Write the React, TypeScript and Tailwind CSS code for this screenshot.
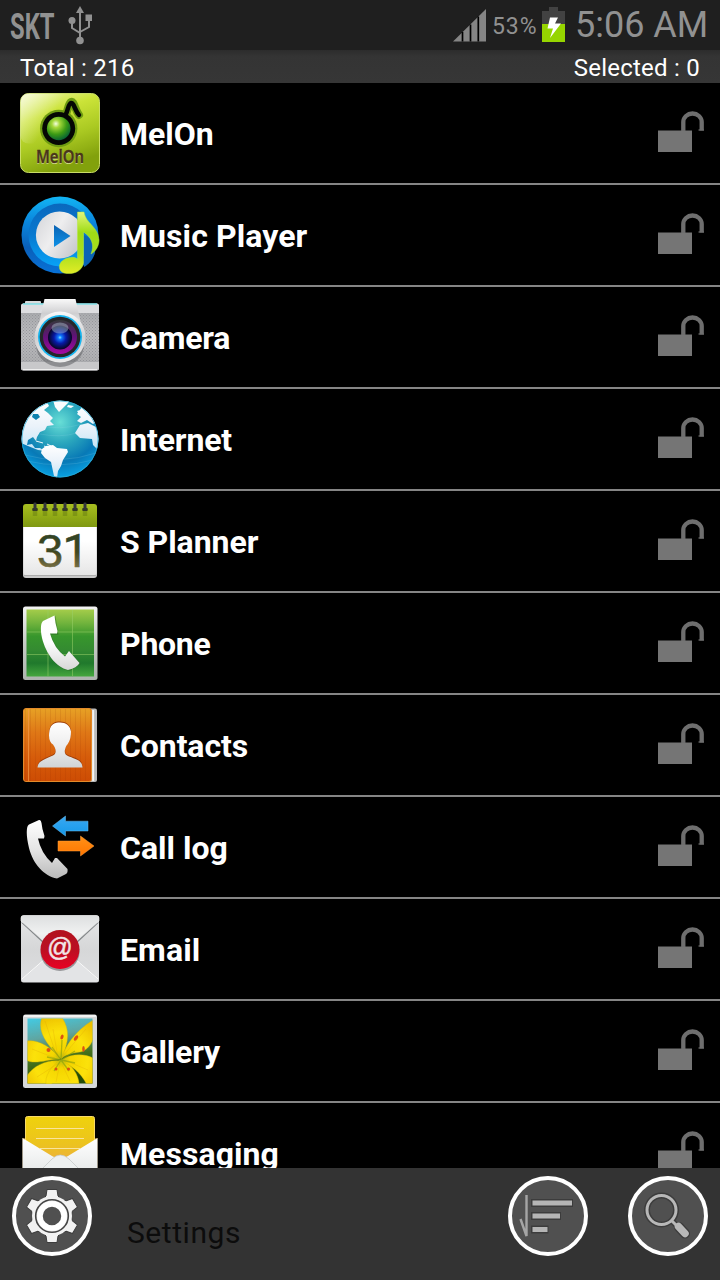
import type { ReactNode } from "react";

function Grad({ id, stops, x2 = 0, y2 = 1 }: { id: string; stops: string[]; x2?: number; y2?: number }) {
  return (
    <linearGradient id={id} x1="0" y1="0" x2={x2} y2={y2}>
      {stops.map((c, i) => (
        <stop key={i} offset={i / (stops.length - 1)} stopColor={c} />
      ))}
    </linearGradient>
  );
}

function Icon({ children }: { children: ReactNode }) {
  return (
    <svg viewBox="0 0 80 80" className="h-20 w-20 shrink-0">
      {children}
    </svg>
  );
}

const MelonIcon = () => (
  <Icon>
    <defs>
      <Grad id="mel-bg" x2={0.35} stops={["#eef6b0", "#cbe338", "#aac922", "#82a10c"]} />
      <Grad id="mel-shine" x2={1} y2={0.4} stops={["#ffffff99", "#ffffff00", "#cdea2200"]} />
      <radialGradient id="mel-ball" cx="0.38" cy="0.3" r="0.75">
        <stop offset="0" stopColor="#f4ffe0" />
        <stop offset="0.22" stopColor="#a5d83a" />
        <stop offset="0.6" stopColor="#3c9b14" />
        <stop offset="1" stopColor="#005c38" />
      </radialGradient>
    </defs>
    <rect x="0.5" y="0.5" width="79" height="79" rx="8" fill="url(#mel-bg)" stroke="#c9dd67" />
    <rect x="0.5" y="0.5" width="79" height="50" rx="8" fill="url(#mel-shine)" />
    <path d="M46 21 C48 17 48.500 10 51 9 C54 7.500 55 17 59 22" fill="none" stroke="#6e9b12" strokeWidth="8" strokeLinecap="round" />
    <circle cx="38.700" cy="35.500" r="18.700" fill="#6e9b12" />
    <path d="M46 21 C48 17 48.500 10.500 51 10 C54 9.500 55 18 59 22" fill="none" stroke="#050704" strokeWidth="4.500" strokeLinecap="round" />
    <circle cx="38.700" cy="35.500" r="16.500" fill="#050704" />
    <circle cx="38.700" cy="35.500" r="11.800" fill="url(#mel-ball)" />
    <text x="16" y="71" textLength="48" lengthAdjust="spacingAndGlyphs" fill="#e4ee9a" className="font-['Noto_Sans'] text-[17.5px] font-semibold">MelOn</text>
    <text x="16" y="70" textLength="48" lengthAdjust="spacingAndGlyphs" fill="#49351a" stroke="#49351a" strokeWidth="0.400" className="font-['Noto_Sans'] text-[17.5px] font-semibold">MelOn</text>
  </Icon>
);

const MusicIcon = () => (
  <Icon>
    <defs>
      <Grad id="mu-a" stops={["#12b5f4", "#0a86dc", "#0a5fb9", "#0872d8"]} />
      <Grad id="mu-b" stops={["#0a68bd", "#0879d0", "#08a2f6"]} />
      <Grad id="mu-c" x2={1} y2={0.6} stops={["#d3d4d8", "#eeeeef", "#c8c9ce"]} />
      <Grad id="mu-d" stops={["#e3f67a", "#9fdc16", "#a8de1d", "#e2ec25"]} />
      <Grad id="mu-e" stops={["#0b63b3", "#0e91e7"]} />
    </defs>
    <circle cx="40" cy="40" r="38.500" fill="url(#mu-a)" />
    <circle cx="40" cy="40" r="31.500" fill="url(#mu-b)" />
    <circle cx="39.500" cy="40" r="23.600" fill="url(#mu-c)" />
    <path d="M34 30 L50.500 41 L34 52 Z" fill="url(#mu-e)" />
    <path d="M64 40 C72 43 76 51 75 58 C73 65 68 70 64 72 Z" fill="#0a64b4" />
    <path d="M57.500 17 L64 17 C66 29 78 31 79 45 C79 51 76 56 71 59 C75 49 71 42 63.500 37 L63.500 68 C62 77 52 80 44 78 C36 75 39 65 48 63 C52 62 55 62 57.500 64 Z" fill="url(#mu-d)" stroke="#b5e83e" strokeWidth="0.500" />
  </Icon>
);

const CameraIcon = () => (
  <Icon>
    <defs>
      <Grad id="ca-b" stops={["#a4a5a9", "#bdbdc0", "#a9a9ab"]} />
      <Grad id="ca-m" stops={["#f9f9f9", "#cfcfd1", "#eeeeee"]} />
      <Grad id="ca-l" stops={["#35383b", "#62117a", "#a50aa3"]} />
      <radialGradient id="ca-g">
        <stop offset="0" stopColor="#7ce9ff" />
        <stop offset="0.16" stopColor="#1175ff" />
        <stop offset="0.5" stopColor="#0719a5" />
        <stop offset="1" stopColor="#07051f" />
      </radialGradient>
      <pattern id="ca-p" width="3" height="3" patternUnits="userSpaceOnUse">
        <rect width="1" height="1" fill="#94959a" />
        <rect x="1.500" y="1.500" width="1" height="1" fill="#94959a" />
      </pattern>
    </defs>
    <rect x="5" y="4" width="16" height="5" rx="1" fill="#d9dadc" />
    <rect x="1" y="6.500" width="78" height="67" rx="2.500" fill="url(#ca-b)" />
    <path d="M1 16 V9 Q1 6.500 3.500 6.500 H76.500 Q79 6.500 79 9 V16 Z" fill="#dddde0" />
    <path d="M3 7 H77" stroke="#56e5ef" strokeWidth="1.200" />
    <rect x="1" y="16" width="78" height="49" fill="url(#ca-p)" />
    <path d="M1 65 H79 V71 Q79 73.500 76.500 73.500 H3.500 Q1 73.500 1 71 Z" fill="#c8c8ca" />
    <path d="M3 72.500 H77" stroke="#eee" />
    <ellipse cx="40" cy="48" rx="24" ry="22" fill="#66676b" opacity="0.600" />
    <path d="M24.500 2 H55.500 L62 31 H18 Z" fill="url(#ca-m)" />
    <circle cx="40" cy="40" r="25.500" fill="url(#ca-m)" />
    <circle cx="40" cy="40" r="22" fill="#17b5ef" />
    <circle cx="40" cy="40" r="20.300" fill="#25272a" />
    <circle cx="40" cy="40" r="17" fill="url(#ca-l)" />
    <circle cx="40" cy="40.500" r="12" fill="url(#ca-g)" />
    <ellipse cx="40" cy="31" rx="8.500" ry="5.500" fill="#aec5d5" opacity="0.450" />
  </Icon>
);

const InternetIcon = () => (
  <Icon>
    <defs>
      <radialGradient id="in-g" cx="0.5" cy="0.28" r="0.72">
        <stop offset="0" stopColor="#68ded6" />
        <stop offset="0.38" stopColor="#2ba7bd" />
        <stop offset="0.72" stopColor="#0879b6" />
        <stop offset="1" stopColor="#08a1e3" />
      </radialGradient>
      <Grad id="in-l" stops={["#ffffff", "#eaf2fa", "#c3e4f6"]} />
      <clipPath id="in-c"><circle cx="40" cy="40" r="38.500" /></clipPath>
    </defs>
    <circle cx="40" cy="40" r="38.500" fill="url(#in-g)" />
    <g clipPath="url(#in-c)">
      <path d="M5 56 Q40 66 76 54 M7 62 Q40 70 73 61 M17 26 Q40 32 62 25 M20 35 Q40 39 57 34" fill="none" stroke="#9bdeef" strokeWidth="0.500" opacity="0.350" />
      <path d="M0 23 L14 10 L27 3 L29 7 L24 11 L28 14 L33 19 L30 22 L34 26 L27 27 L25 31 L20 33 L17 38 L16 42 L13 38 L8 41 L7 46 L12 45 L15 49 L20 49 L25 52 L18 51 L8 47 L1 44 Z" fill="url(#in-l)" />
      <path d="M13 15 L18 15 L20 18 L16 21 L12 18 Z" fill="#0d82ae" />
      <path d="M33 1 L50 2 L45 7 L39 13 L35 8 Z" fill="#fbfdfe" />
      <path d="M48 6 L54 7 L51 9 L47 8 Z M57 12 L60 11 L59 15 Z M62 8 L68 13 L76 23 L73 25 L67 21 L61 24 L57 22 L61 18 L57 15 Z M60 26 L68 24 L76 28 L80 39 L77 50 L73 46 L72 40 L60 39 L55 34 Z" fill="url(#in-l)" />
      <path d="M27 45 L31 47 L29 49 M16 42 L23 44 M24 47 L28 49" fill="none" stroke="#eff7fc" strokeWidth="1" />
      <path d="M22 50 L26 47 L33 46 L37 49 L47 50 L48 53 L43 61 L41 67 L38 72 L37 79 L34 77 L31 63 L25 59 L21 54 Z" fill="url(#in-l)" />
    </g>
    <circle cx="40" cy="40" r="38" fill="none" stroke="#2eacd3" strokeWidth="0.700" />
  </Icon>
);

const PlannerIcon = () => (
  <Icon>
    <defs>
      <Grad id="pl-g" stops={["#a7bd20", "#93ac16", "#7f9813"]} />
      <Grad id="pl-w" stops={["#ffffff", "#ffffff", "#e6e6e6"]} />
      <linearGradient id="pl-t" gradientUnits="userSpaceOnUse" x1="0" y1="32" x2="0" y2="67">
        <stop offset="0" stopColor="#304326" /><stop offset="0.55" stopColor="#414720" /><stop offset="1" stopColor="#776f45" />
      </linearGradient>
    </defs>
    <rect x="3" y="5" width="74" height="72" rx="3" fill="#c9c9c9" />
    <rect x="3.500" y="6" width="73" height="68" rx="2" fill="url(#pl-w)" />
    <path d="M4 74.500 H76" stroke="#9b9b9b" strokeWidth="0.600" />
    <path d="M3 26 V6 Q3 3 6 3 H74 Q77 3 77 6 V26 Z" fill="url(#pl-g)" />
    {[15, 25, 35, 45, 55, 65].map((x) => (
      <g key={x}>
        <rect x={x - 2.2} y="10" width="4.400" height="5" fill="#708612" opacity="0.600" />
        <rect x={x - 2.8} y="7" width="5.600" height="3" rx="1" fill="#343a25" />
        <rect x={x - 1.5} y="1.500" width="3" height="7" rx="1" fill="#34363a" />
      </g>
    ))}
    <text y="66" fill="url(#pl-t)" stroke="url(#pl-t)" strokeWidth="0.500">
      <tspan x="17" className="font-['Liberation_Sans'] text-[47px]">3</tspan>
      <tspan x="42.500" className="font-[Roboto] text-[47px]">1</tspan>
    </text>
  </Icon>
);

const PhoneIcon = () => (
  <Icon>
    <defs>
      <Grad id="ph-g" stops={["#a4cc4a", "#72b43d", "#37962c", "#348b31", "#20792c", "#44a63d"]} />
      <Grad id="ph-f" stops={["#f2f2f2", "#c5cac5", "#adb3ae"]} />
      <Grad id="ph-h" stops={["#ffffff", "#fefefe", "#d7d7d7"]} />
    </defs>
    <rect x="3" y="3.500" width="74.500" height="73.500" rx="2.500" fill="url(#ph-f)" />
    <rect x="6.500" y="6.500" width="67.500" height="67" fill="url(#ph-g)" />
    <path d="M28 7 V73 M52.500 7 V73 M7 29 H74 M7 51.500 H74" stroke="#9bd06a" strokeWidth="0.800" opacity="0.650" />
    <path d="M23 18 L34.500 12 L37.500 31 L30 31 Q35 45 45 54 L49 48 L60 60 L49 67 C36 65 25 51 22 35 C20 25 21 20 23 18 Z" transform="translate(1 1)" fill="#2b6c26" opacity="0.500" />
    <path d="M23 18 L34.500 12.500 Q35 20 37.500 28 L37 30.500 L30 30.500 Q34 45 45 53.500 L49 48 L59.500 60 Q57 65 48 67 C36 64 26 51 22 35 C20 25 21 20 23 18 Z" fill="url(#ph-h)" strokeLinejoin="round" />
  </Icon>
);

const ContactsIcon = () => (
  <Icon>
    <defs>
      <Grad id="co-g" stops={["#e7a125", "#df7716", "#d65c0a", "#cd4c04"]} />
      <Grad id="co-p" stops={["#ffffff", "#eeeeee", "#d0d4d6"]} />
      <pattern id="co-s" width="5" height="8" patternUnits="userSpaceOnUse"><rect width="1" height="8" fill="#8c2c00" opacity="0.120" /></pattern>
    </defs>
    <rect x="68" y="3.500" width="9" height="73.500" rx="2" fill="#b9b9b9" />
    <path d="M73.200 5 V76" stroke="#f5f5f5" strokeWidth="2" />
    <rect x="3.500" y="3.500" width="68" height="73" rx="2.500" fill="url(#co-g)" stroke="#e38a29" />
    <rect x="4" y="4" width="67" height="72" fill="url(#co-s)" />
    <path d="M8.500 4 V76" stroke="#f39a48" strokeWidth="0.700" />
    <path d="M17.500 62 C18 55 25 54 33 50 C37 48 36 43 33 39 C30 37 28 33 29.500 25 C31 18 35 17 40 17 C46 17 50 20 51 26 C51 35 48 38 46 41 C44 46 44 49 49 51 C57 54 62 55 62.500 62 Z" transform="translate(0 -0.500)" fill="#9e3e08" />
    <path d="M17.500 62 C18 55 25 54 33 50 C37 48 36 43 33 39 C30 37 28 33 29.500 25 C31 18 35 17 40 17 C46 17 50 20 51 26 C51 35 48 38 46 41 C44 46 44 49 49 51 C57 54 62 55 62.500 62 Z" transform="translate(0 0.500)" fill="url(#co-p)" />
  </Icon>
);

const CallLogIcon = () => (
  <Icon>
    <defs>
      <Grad id="cl-h" stops={["#ffffff", "#e5e5e5", "#bababa"]} />
      <Grad id="cl-b" stops={["#39a8f2", "#1599e9"]} />
      <Grad id="cl-o" stops={["#ff9118", "#ff7600"]} />
    </defs>
    <path d="M9 17.500 L19 13 Q21 12.500 21.500 16 Q22 22 24.500 29 L24 31.500 L18 31.500 Q21 46 32 56 L35 51 L37 51 L47.500 62 Q48 66 46 67 L37 71.500 C24 69 13 57 9 41 C6 29 6 19 9 17.500 Z" fill="url(#cl-h)" />
    <path d="M32.500 19 L45.500 9 V14.200 H68 V24 H45.500 V29 Z" fill="url(#cl-b)" stroke="#68bcf3" strokeWidth="0.500" />
    <path d="M38 34 H60.500 V29 L74 39 L60.500 49 V44 H38 Z" fill="url(#cl-o)" stroke="#ff9f3d" strokeWidth="0.500" />
  </Icon>
);

const EmailIcon = () => (
  <Icon>
    <defs>
      <Grad id="em-g" stops={["#e5e6e7", "#d6d7d8", "#dddee0"]} />
      <Grad id="em-t" stops={["#dddfe0", "#f0f1f1", "#d9dbdc"]} />
      <Grad id="em-r" stops={["#b2121f", "#ba1022", "#e90023"]} />
    </defs>
    <rect x="1" y="6.500" width="78" height="67" rx="2.500" fill="url(#em-g)" />
    <path d="M2 71 L34 42 H46 L78 71 L76 73 H4 Z" fill="#e3e4e6" />
    <path d="M2 70 L34 42 M78 70 L46 42" stroke="#fafafa" />
    <path d="M1 13.500 L30 40.500 Q40 48 50 40.500 L79 13.500" fill="#84888a" />
    <path d="M1 9 Q1 6.500 3.500 6.500 H76.500 Q79 6.500 79 9 V12 L50 38 Q40 46 30 38 L1 12 Z" fill="url(#em-t)" stroke="#eeeeee" strokeWidth="0.600" />
    <ellipse cx="40" cy="43" rx="19.500" ry="19" fill="#76777b" opacity="0.700" />
    <circle cx="40" cy="40.500" r="19.500" fill="url(#em-r)" />
    <text x="40" y="47" textAnchor="middle" fill="#f2e4e6" stroke="#f2e4e6" strokeWidth="0.500" className="font-['Liberation_Sans'] text-[25px]">@</text>
  </Icon>
);

const GalleryIcon = () => (
  <Icon>
    <defs>
      <Grad id="ga-g" x2={0.2} stops={["#42cce6", "#60a6a2", "#45721e", "#244d08"]} />
      <radialGradient id="ga-p" gradientUnits="userSpaceOnUse" cx="41" cy="48" r="45">
        <stop offset="0" stopColor="#b7bd12" /><stop offset="0.2" stopColor="#f4d500" /><stop offset="0.6" stopColor="#fce20b" /><stop offset="1" stopColor="#edc000" />
      </radialGradient>
      <clipPath id="ga-c"><rect x="7.500" y="7.500" width="65" height="65" /></clipPath>
    </defs>
    <rect x="3" y="3.500" width="74" height="73.500" rx="2.500" fill="#d6d9da" />
    <rect x="4" y="4" width="72" height="2" fill="#f2f3f3" />
    <g clipPath="url(#ga-c)">
      <rect x="7" y="7" width="66" height="66" fill="url(#ga-g)" />
      <g fill="url(#ga-p)" stroke="#dcb908" strokeWidth="0.400">
        <path d="M40 47 C28 34 15 20 23 4 L41 5 C52 20 47 34 42 47 Z" />
        <path d="M41 48 C46 35 54 20 75 8 C77 24 71 39 60 41 C51 42 45 44 41 48 Z" />
        <path d="M40 47 C30 35 18 28 5 30 V48 C13 55 27 48 40 48 Z" />
        <path d="M40 50 C28 48 10 55 5 69 L9 75 H31 C34 66 35 56 40 50 Z" />
        <path d="M40 49 C30 56 23 68 27 76 H59 C60 66 53 54 42 49 Z" />
        <path d="M41 49 C52 42 67 42 76 49 L77 74 H67 C61 61 51 55 41 49 Z" />
      </g>
      <path d="M38 47 L33 18 M37 46 L25 10 M42 46 L66 18 M35 47 L12 38 M44 49 L68 59 M39 52 L17 66 M40 52 L36 71 M42 53 L50 70" stroke="#d99b05" strokeWidth="0.600" opacity="0.400" />
      <path d="M41 49 L42 29 M41 49 L32 36 M41 49 L55 40 M41 49 L34 60 M41 49 L49 60 M41 49 L27 46 M41 49 L55 52" stroke="#839d0f" strokeWidth="1.300" opacity="0.600" />
      <g fill="#dc5213">
        <ellipse cx="42" cy="26" rx="1.500" ry="2.500" transform="rotate(20 42 26)" /><ellipse cx="56" cy="27" rx="1.600" ry="3" transform="rotate(35 56 27)" />
        <circle cx="28.500" cy="39" r="2" /><ellipse cx="63.500" cy="38" rx="1.300" ry="3" /><circle cx="36" cy="58" r="1.500" /><circle cx="48.500" cy="58" r="1.600" />
      </g>
    </g>
  </Icon>
);

const MessagingIcon = () => (
  <Icon>
    <defs>
      <Grad id="me-y" stops={["#efd20c", "#ecc31e", "#eca451"]} />
      <Grad id="me-w" stops={["#ffffff", "#d9dddd"]} />
    </defs>
    <path d="M2.500 25 H77.500 V78 H2.500 Z" fill="#8a6a30" />
    <rect x="5.500" y="3.500" width="69" height="55" rx="2" fill="url(#me-y)" stroke="#f8d967" />
    <path d="M16 15.500 H64 M16 25.500 H64 M20 35.500 H60" stroke="#f8e49c" strokeWidth="1" />
    <path d="M2.500 25 L32 43 Q40 48 48 43 L77.500 25 V78 H2.500 Z" fill="url(#me-w)" />
    <path d="M7 71 L32 46 Q40 38 49 46 L74 71 Z" fill="#edf0f0" stroke="#c1c5c5" strokeWidth="0.700" />
  </Icon>
);

const Lock = () => (
  <svg viewBox="0 0 54 44" className="mb-[2px] h-[44px] w-[54px] shrink-0" fill="none">
    <path d="M5 20.500 H39 V42 H5 Z" fill="#757575" />
    <path d="M30.300 21 V12 A9.200 8.500 0 0 1 48.700 12 V20.500" stroke="#6e6e6e" strokeWidth="4.300" />
    <path d="M45.500 20 H51" stroke="#6e6e6e" strokeWidth="1.200" />
  </svg>
);

const apps: { name: string; icon: () => ReactNode; cls: string }[] = [
  { name: "MelOn", icon: MelonIcon, cls: "tracking-[0px]" },
  { name: "Music Player", icon: MusicIcon, cls: "tracking-[0.08px]" },
  { name: "Camera", icon: CameraIcon, cls: "tracking-[-0.2px]" },
  { name: "Internet", icon: InternetIcon, cls: "tracking-[-0.15px]" },
  { name: "S Planner", icon: PlannerIcon, cls: "tracking-[-0.05px]" },
  { name: "Phone", icon: PhoneIcon, cls: "tracking-[-0.25px]" },
  { name: "Contacts", icon: ContactsIcon, cls: "tracking-[-0.1px]" },
  { name: "Call log", icon: CallLogIcon, cls: "tracking-[0px]" },
  { name: "Email", icon: EmailIcon, cls: "tracking-[0.1px]" },
  { name: "Gallery", icon: GalleryIcon, cls: "tracking-[-0.2px]" },
  { name: "Messaging", icon: MessagingIcon, cls: "tracking-[0.08px]" },
];

function RoundButton({ label, children }: { label: string; children: ReactNode }) {
  return (
    <button aria-label={label} className="h-20 w-20 shrink-0 rounded-full border-4 border-white bg-[#505050]">
      <svg viewBox="4 4 72 72" className="h-[72px] w-[72px]" fill="none">{children}</svg>
    </button>
  );
}

const gearTeeth = [0, 60, 120, 180, 240, 300];

export default function App() {
  return (
    <div className="flex h-[1280px] w-[720px] flex-col overflow-hidden bg-black font-[Roboto,sans-serif]">
      <div className="flex h-[50px] shrink-0 items-center bg-[#1f1f1f] text-[#919191]">
        <span className="ml-[10px] mt-[3px] w-[58px] origin-left scale-x-[0.66] text-[36px] leading-none font-bold">SKT</span>
        <svg viewBox="0 0 24 40" className="h-10 w-6" fill="none" stroke="#919191" strokeWidth="2">
          <path d="M12 8 V36 M4 15 V23 L12 28 M21 13 V22 L12 27" />
          <path d="M12 1 L16 8 H8 Z" fill="#919191" stroke="none" />
          <circle cx="4" cy="15.500" r="3.500" fill="#919191" stroke="none" />
          <circle cx="12" cy="35.500" r="3.800" fill="#919191" stroke="none" />
          <rect x="17.500" y="9.500" width="6.500" height="6.500" fill="#919191" stroke="none" />
        </svg>
        <svg viewBox="0 0 34 34" className="ml-[361px] h-[34px] w-[34px]">
          <path d="M0 33.500 L33 1 V33.500 Z" fill="#858585" />
          <path d="M9.500 24 V33.500 M17.500 16.500 V33.500 M25.300 8.500 V33.500" stroke="#000" strokeWidth="1.700" />
        </svg>
        <span className="mt-[2px] ml-[5px] w-[50px] text-[23px] leading-none tracking-[0.9px] whitespace-nowrap">53%</span>
        <svg viewBox="0 0 23 36" className="h-9 w-[23px]">
          <path d="M0 4 H7 V0 H16 V4 H23 V17 H0 Z" fill="#424242" />
          <rect y="17" width="23" height="18" fill="#96d500" />
          <path d="M8 10.500 H16 L13 16.500 H19 L8 31 L11 21.500 H5.500 Z" fill="#fff" />
        </svg>
        <span className="ml-[10px] text-[36px] leading-none tracking-[0px] whitespace-nowrap">5:06 AM</span>
      </div>
      <div className="flex h-[33px] shrink-0 items-center justify-between bg-linear-to-b from-[#2c2c2c] via-[#343434] via-20% to-[#363636] px-5 pt-[2px] text-[24px] leading-none text-white">
        <span className="tracking-[0.24px]">Total : 216</span>
        <span className="tracking-[0.24px]">Selected : 0</span>
      </div>
      <main className="h-[1085px] shrink-0 overflow-hidden">
        {apps.map(({ name, icon: AppIcon, cls }) => (
          <div key={name} className="flex h-[102px] items-center border-b-2 border-[#858585] pr-[13px] pl-5">
            <AppIcon />
            <span className={`ml-5 flex-1 pt-[2px] text-[32px] leading-[38px] font-bold text-white ${cls}`}>{name}</span>
            <Lock />
          </div>
        ))}
      </main>
      <footer className="flex h-[112px] shrink-0 items-start bg-[#333] px-3 pt-2">
        <RoundButton label="Settings">
          <g fill="#f2f2f2" stroke="#3d3d3d" strokeWidth="1">
            {gearTeeth.map((a) => (
              <path key={a} d="M32 22 L34 20 L35 13.500 H45 L46 20 L48 22 Z" transform={`rotate(${a} 40 40)`} />
            ))}
            <circle cx="40" cy="40" r="20" stroke="none" />
          </g>
          <circle cx="40" cy="40" r="16.300" stroke="#444" strokeWidth="1.600" />
          <circle cx="40" cy="40" r="12" fill="#505050" stroke="#fff" strokeWidth="5.500" />
        </RoundButton>
        <span className="mt-[39px] ml-[35px] w-[381px] text-[30px] leading-[35px] tracking-[0.55px] text-[#0c0c0c]">Settings</span>
        <RoundButton label="Sort">
          <path d="M23 27 H65 M23 40 H53 M23 53.500 H40.500" stroke="#3c3c3c" strokeWidth="8" />
          <path d="M24.500 27 H64 M24.500 40 H52 M24.500 53.500 H39.500" stroke="#b5b5b5" strokeWidth="5" />
          <path d="M18.500 19 V60 L12.500 43" stroke="#a5a5a5" strokeWidth="2.400" />
        </RoundButton>
        <div className="ml-10">
          <RoundButton label="Search">
            <g stroke="#3c3c3c" strokeWidth="6"><circle cx="33.500" cy="34" r="14.500" /><path d="M43 44 L49 50" /><path d="M51 51 L57 57.500" strokeWidth="10" strokeLinecap="round" /></g>
            <g stroke="#b8b8b8" strokeWidth="3"><circle cx="33.500" cy="34" r="14.500" /><path d="M43 44 L49 50" /><path d="M50.500 50.500 L57 57.500" strokeWidth="7.500" strokeLinecap="round" /></g>
          </RoundButton>
        </div>
      </footer>
    </div>
  );
}
